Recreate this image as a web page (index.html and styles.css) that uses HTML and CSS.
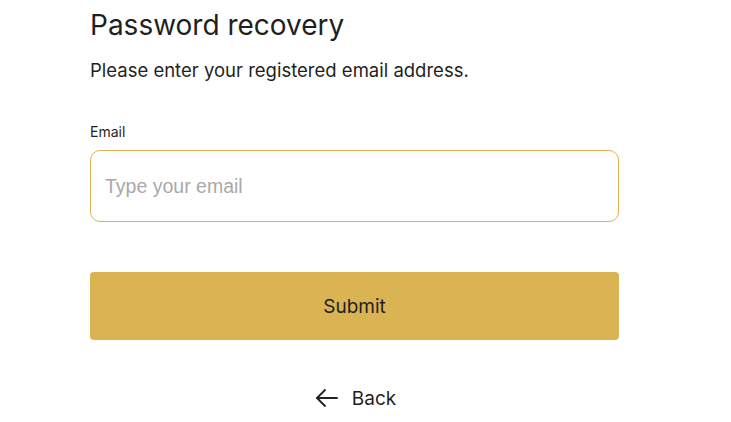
FILE: index.html
```html
<!DOCTYPE html>
<html>
<head>
	<title>Password recovery</title>
	<link rel="stylesheet" href="styles.css">
</head>
<body>
	<main class="wrap">
		<h1 class="title">Password recovery</h1>
		<p class="lead">Please enter your registered email address.</p>

		<form class="form">
			<label for="email" class="label">Email</label>
			<input type="text" id="email" class="field" placeholder="Type your email">
			<button type="button" class="submit">Submit</button>
		</form>

		<a href="#" class="back">
			<svg width="24" height="24" viewBox="0 0 24 24" fill="none" stroke="#222" stroke-width="1.8" stroke-linecap="round" stroke-linejoin="round">
				<path d="M22 12H2"></path>
				<path d="M10 4l-8 8 8 8"></path>
			</svg>
			<span>Back</span>
		</a>
	</main>
</body>
</html>
```

FILE: styles.css
```css
*{
	margin: 0px;
	padding: 0px;
	box-sizing: border-box;
}
body{
	background: #fff;
	color: #1f1f1f;
	font-family: "Inter", "Liberation Sans", sans-serif;
}
.wrap{
	width: 529px;
	margin-left: 90px;
	padding-top: 7px;
}
.title{
	font-size: 28px;
	font-weight: 400;
	line-height: 36px;
}
.lead{
	margin-top: 15px;
	font-size: 18.5px;
	line-height: 24px;
}
.form{
	margin-top: 42px;
	display: flex;
	flex-direction: column;
}
.label{
	font-size: 14px;
	line-height: 16px;
	margin-bottom: 10px;
}
.field{
	height: 72px;
	border: 1px solid #dcb350;
	border-radius: 10px;
	padding: 0 14px;
	font-family: "Liberation Sans", Arial, sans-serif;
	font-size: 19.5px;
	outline: none;
	color: #222;
}
.field::placeholder{
	color: #a9a9a9;
}
.submit{
	margin-top: 50px;
	height: 68px;
	border: none;
	border-radius: 4px;
	background-color: #dab352;
	font-family: "Inter", "Liberation Sans", sans-serif;
	font-size: 19px;
	color: #1f1f1f;
}
.back{
	margin-top: 46px;
	margin-left: 2px;
	display: flex;
	justify-content: center;
	align-items: center;
	gap: 13px;
	text-decoration: none;
	color: #1f1f1f;
	font-size: 19px;
}
```
